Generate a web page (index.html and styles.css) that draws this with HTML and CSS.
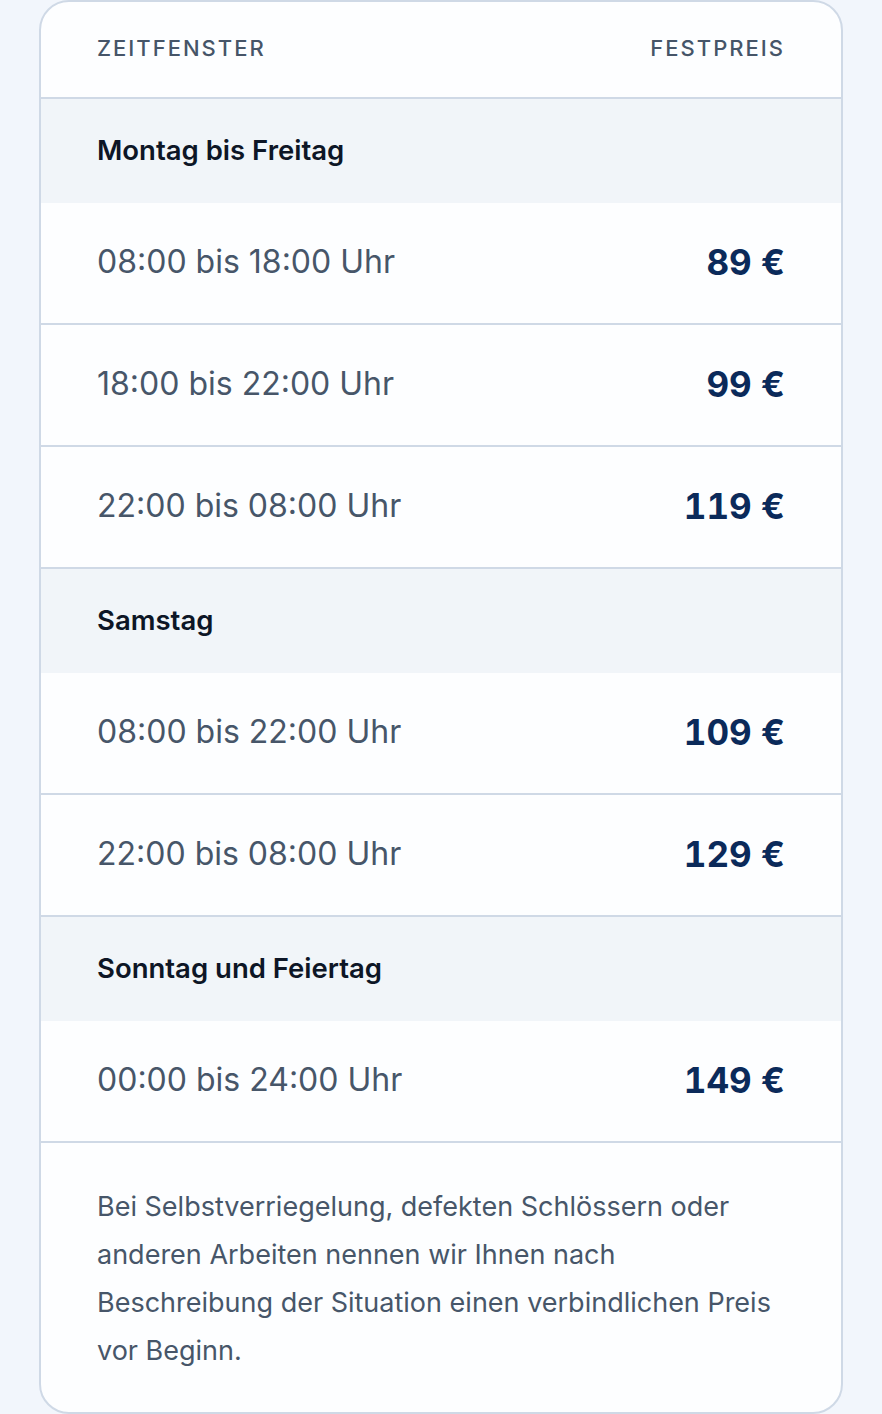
FILE: index.html
```html
<!DOCTYPE html>
<html lang="de">
<head>
    <meta charset="UTF-8">
    <meta name="viewport" content="width=device-width, initial-scale=1.0">
    <title>Preise</title>
    <link rel="stylesheet" href="styles.css">
</head>
<body>

    <div class="card">
        <div class="head">
            <span>Zeitfenster</span>
            <span>Festpreis</span>
        </div>

        <div class="group">Montag bis Freitag</div>
        <div class="row"><span class="time">08:00 bis 18:00 Uhr</span><span class="price">89 €</span></div>
        <div class="row"><span class="time">18:00 bis 22:00 Uhr</span><span class="price">99 €</span></div>
        <div class="row"><span class="time">22:00 bis 08:00 Uhr</span><span class="price">119 €</span></div>

        <div class="group">Samstag</div>
        <div class="row"><span class="time">08:00 bis 22:00 Uhr</span><span class="price">109 €</span></div>
        <div class="row"><span class="time">22:00 bis 08:00 Uhr</span><span class="price">129 €</span></div>

        <div class="group">Sonntag und Feiertag</div>
        <div class="row"><span class="time">00:00 bis 24:00 Uhr</span><span class="price">149 €</span></div>

        <p class="note">Bei Selbstverriegelung, defekten Schlössern oder anderen Arbeiten nennen wir Ihnen nach Beschreibung der Situation einen verbindlichen Preis vor Beginn.</p>
    </div>

</body>
</html>
```

FILE: styles.css
```css
body {
    font-family: 'Inter', 'Noto Sans', sans-serif;
    background: #f2f6fc;
    margin: 0;
    padding: 0 39px;
}
.card {
    background: #fdfeff;
    border: 2px solid #cfd9e6;
    border-radius: 30px;
    overflow: hidden;
}
.head {
    display: flex;
    justify-content: space-between;
    align-items: center;
    height: 91px;
    padding: 0 56px 4px;
    border-bottom: 2px solid #cfd9e6;
    font-size: 22px;
    font-weight: 500;
    letter-spacing: 2px;
    text-transform: uppercase;
    color: #465568;
}
.group {
    display: flex;
    align-items: center;
    height: 101px;
    padding: 0 56px 3px;
    background: #f1f5f9;
    font-size: 27.5px;
    font-weight: 600;
    color: #0d1626;
}
.row {
    display: flex;
    justify-content: space-between;
    align-items: center;
    height: 117px;
    padding: 0 56px 3px;
    border-bottom: 2px solid #cfd9e6;
}
.time {
    font-size: 32px;
    color: #475669;
}
.price {
    font-size: 35px;
    font-weight: 700;
    font-variant-numeric: tabular-nums;
    color: #0b2a5a;
}
.note {
    margin: 0;
    padding: 40px 56px 37px;
    font-size: 27px;
    line-height: 48px;
    color: #475669;
}
```
